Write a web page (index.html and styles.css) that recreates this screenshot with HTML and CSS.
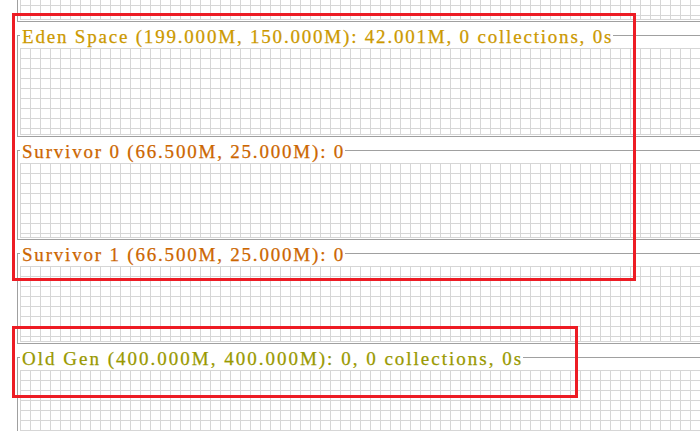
FILE: index.html
```html
<!DOCTYPE html>
<html>
<head>
<meta charset="utf-8">
<link rel="stylesheet" href="styles.css">
</head>
<body>
<div class="page">
  <div class="panel">
    <div class="body"><div class="grid grid-cut"></div></div>
  </div>
  <section class="panel">
    <div class="title"><span class="label eden">Eden Space (199.000M, 150.000M): 42.001M, 0 collections, 0s</span></div>
    <div class="body"><div class="grid grid-eden"></div></div>
  </section>
  <section class="panel">
    <div class="title"><span class="label survivor">Survivor 0 (66.500M, 25.000M): 0</span></div>
    <div class="body"><div class="grid grid-s0"></div></div>
  </section>
  <section class="panel">
    <div class="title"><span class="label survivor">Survivor 1 (66.500M, 25.000M): 0</span></div>
    <div class="body"><div class="grid grid-s1"></div></div>
  </section>
  <section class="panel">
    <div class="title"><span class="label old">Old Gen (400.000M, 400.000M): 0, 0 collections, 0s</span></div>
    <div class="body"><div class="grid grid-old"></div></div>
  </section>
  <div class="mark mark-young"></div>
  <div class="mark mark-old"></div>
</div>
</body>
</html>
```

FILE: styles.css
```css
html, body {
  margin: 0;
  padding: 0;
  background: #ffffff;
}

.page {
  position: relative;
  width: 700px;
  height: 431px;
  overflow: hidden;
  padding-left: 17px;
  box-sizing: border-box;
  background: #ffffff;
}

.panel {
  display: flex;
  flex-direction: column;
}

.title {
  display: flex;
  align-items: flex-start;
  height: 26px;
}

.title::before {
  content: "";
  align-self: stretch;
  margin-top: 13px;
  width: 2px;
  border-left: 1px solid #a0a0a0;
  border-top: 1px solid #a0a0a0;
}

.title::after {
  content: "";
  flex: 1;
  height: 1px;
  margin-top: 13px;
  background: #a0a0a0;
}

.label {
  font-family: "Liberation Serif", "Times New Roman", serif;
  font-size: 19px;
  letter-spacing: 1.8px;
  line-height: 22px;
  padding-top: 4px;
  padding-left: 2px;
  white-space: pre;
  -webkit-text-stroke: 0.25px currentColor;
}

.eden { color: #cc9900; }
.survivor { color: #cc6600; }
.old { color: #999900; letter-spacing: 2px; }

.body {
  border-left: 1px solid #a0a0a0;
  border-bottom: 1px solid #a0a0a0;
  padding: 0 0 1px 2px;
}

.grid {
  box-sizing: border-box;
  border-bottom: 1px solid #d6d6d6;
  background-color: #ffffff;
  background-image:
    repeating-linear-gradient(to right, #d6d6d6 0, #d6d6d6 1px, transparent 1px, transparent 10px),
    repeating-linear-gradient(to bottom, #d6d6d6 0, #d6d6d6 1px, transparent 1px, transparent 10px);
}

.grid-cut { height: 20px; background-position: 0 5px; }
.grid-eden { height: 87px; }
.grid-s0 { height: 75px; }
.grid-s1 { height: 76px; }
.grid-old { height: 120px; }

.mark {
  position: absolute;
  border: 3px solid #ed1c24;
  box-sizing: border-box;
}

.mark-young {
  left: 12px;
  top: 13px;
  width: 624px;
  height: 268px;
}

.mark-old {
  left: 12px;
  top: 326px;
  width: 566px;
  height: 72px;
}
```
